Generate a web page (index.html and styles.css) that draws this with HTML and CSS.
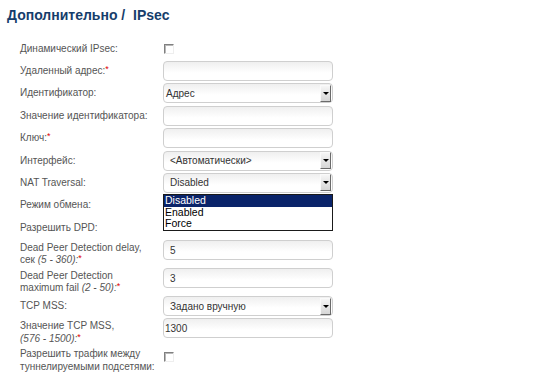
FILE: index.html
```html
<!DOCTYPE html>
<html lang="ru">

<head>
  <meta charset="UTF-8" />
  <title>Дополнительно / IPsec</title>
  <link rel="stylesheet" href="styles.css">
</head>

<body>
  <h1 class="title">Дополнительно /&nbsp; IPsec</h1>

  <div class="form">
    <div class="row">
      <div class="label">Динамический IPsec:</div>
      <div class="field"><input type="checkbox" class="check"></div>
    </div>

    <div class="row">
      <div class="label">Удаленный адрес:<span class="req">*</span></div>
      <div class="field"><input type="text" class="text"></div>
    </div>

    <div class="row">
      <div class="label">Идентификатор:</div>
      <div class="field">
        <div class="select tight"><span class="value">Адрес</span><span class="arrow"></span></div>
      </div>
    </div>

    <div class="row">
      <div class="label">Значение идентификатора:</div>
      <div class="field"><input type="text" class="text"></div>
    </div>

    <div class="row">
      <div class="label">Ключ:<span class="req">*</span></div>
      <div class="field"><input type="password" class="text"></div>
    </div>

    <div class="row">
      <div class="label">Интерфейс:</div>
      <div class="field">
        <div class="select"><span class="value">&lt;Автоматически&gt;</span><span class="arrow"></span></div>
      </div>
    </div>

    <div class="row">
      <div class="label">NAT Traversal:</div>
      <div class="field dropdown">
        <div class="select"><span class="value">Disabled</span><span class="arrow"></span></div>
        <!-- opened list of the select -->
        <ul class="options">
          <li class="selected">Disabled</li>
          <li>Enabled</li>
          <li>Force</li>
        </ul>
      </div>
    </div>

    <!-- controls of the next two rows are covered by the open list -->
    <div class="row">
      <div class="label">Режим обмена:</div>
      <div class="field"></div>
    </div>

    <div class="row">
      <div class="label">Разрешить DPD:</div>
      <div class="field"></div>
    </div>

    <div class="row two">
      <div class="label">Dead Peer Detection delay,<br>сек <i>(5 - 360):</i><span class="req">*</span></div>
      <div class="field"><input type="text" class="text" value="5"></div>
    </div>

    <div class="row two">
      <div class="label">Dead Peer Detection<br>maximum fail <i>(2 - 50):</i><span class="req">*</span></div>
      <div class="field"><input type="text" class="text" value="3"></div>
    </div>

    <div class="row">
      <div class="label">TCP MSS:</div>
      <div class="field">
        <div class="select"><span class="value">Задано вручную</span><span class="arrow"></span></div>
      </div>
    </div>

    <div class="row two">
      <div class="label">Значение TCP MSS,<br><i>(576 - 1500):</i><span class="req">*</span></div>
      <div class="field"><input type="text" class="text tight" value="1300"></div>
    </div>

    <div class="row two check-row">
      <div class="label">Разрешить трафик между<br>туннелируемыми подсетями:</div>
      <div class="field"><input type="checkbox" class="check"></div>
    </div>
  </div>
</body>

</html>
```

FILE: styles.css
```css
* {
  box-sizing: border-box;
  margin: 0;
  padding: 0;
}

body {
  background: #fff;
  font-family: 'Liberation Sans', Arial, sans-serif;
  font-size: 10px;
  color: #555;
}

.title {
  padding: 7px 0 0 7px;
  font-size: 14px;
  line-height: 16px;
  font-weight: bold;
  color: #163d6b;
}

.form {
  display: flex;
  flex-direction: column;
  gap: 2.4px;
  margin-top: 15.6px;
}

.row {
  display: grid;
  grid-template-columns: 143px 170px;
  padding-left: 20px;
  height: 20px;
}

.row.two {
  height: 25.6px;
}

.label {
  padding-top: 4px;
  line-height: 12px;
  white-space: nowrap;
}

.row.two .label {
  padding-top: 1.5px;
  line-height: 12.8px;
}

.label i {
  font-style: italic;
}

.req {
  color: #e00000;
  font-size: 9px;
  vertical-align: top;
  line-height: 9px;
}

.field {
  position: relative;
}

.text,
.select {
  width: 170px;
  height: 20px;
  border: 1px solid #cfcfcf;
  border-radius: 4px;
  background: linear-gradient(#efefef, #fff 60%);
  font-family: 'Liberation Sans', Arial, sans-serif;
  font-size: 10px;
  color: #333;
  padding: 0 6px;
  outline: none;
}

.text.tight {
  padding-left: 1px;
}

.select {
  display: flex;
  align-items: center;
  justify-content: space-between;
  padding-right: 1px;
}

.select.tight {
  padding-left: 2px;
}

.arrow {
  width: 11px;
  height: 17px;
  background: linear-gradient(#f6f6f6, #d6d6d6);
  border-top: 1px solid #fafafa;
  border-left: 1px solid #fafafa;
  border-right: 1px solid #6a6a6a;
  border-bottom: 1px solid #6a6a6a;
  display: flex;
  align-items: center;
  justify-content: center;
}

.arrow::after {
  content: "";
  border-left: 3px solid transparent;
  border-right: 3px solid transparent;
  border-top: 3px solid #000;
}

.check {
  appearance: none;
  display: block;
  width: 10px;
  height: 10px;
  margin: 5px 0 0 1px;
  background: #fff;
  border: 1px solid;
  border-color: #808080 #eeeeee #eeeeee #808080;
  box-shadow: inset 1px 1px #b8b8b8;
}

.check-row .check {
  margin-top: 5.6px;
}

.options {
  position: absolute;
  top: 21px;
  left: 0;
  width: 170px;
  list-style: none;
  background: #fff;
  border: 1px solid #1a1a1a;
  z-index: 2;
  font-size: 10.5px;
  color: #000;
}

.options li {
  height: 11.6px;
  line-height: 11.6px;
  padding-left: 1px;
}

.options li.selected {
  background: #0a246a;
  color: #fff;
}
```
